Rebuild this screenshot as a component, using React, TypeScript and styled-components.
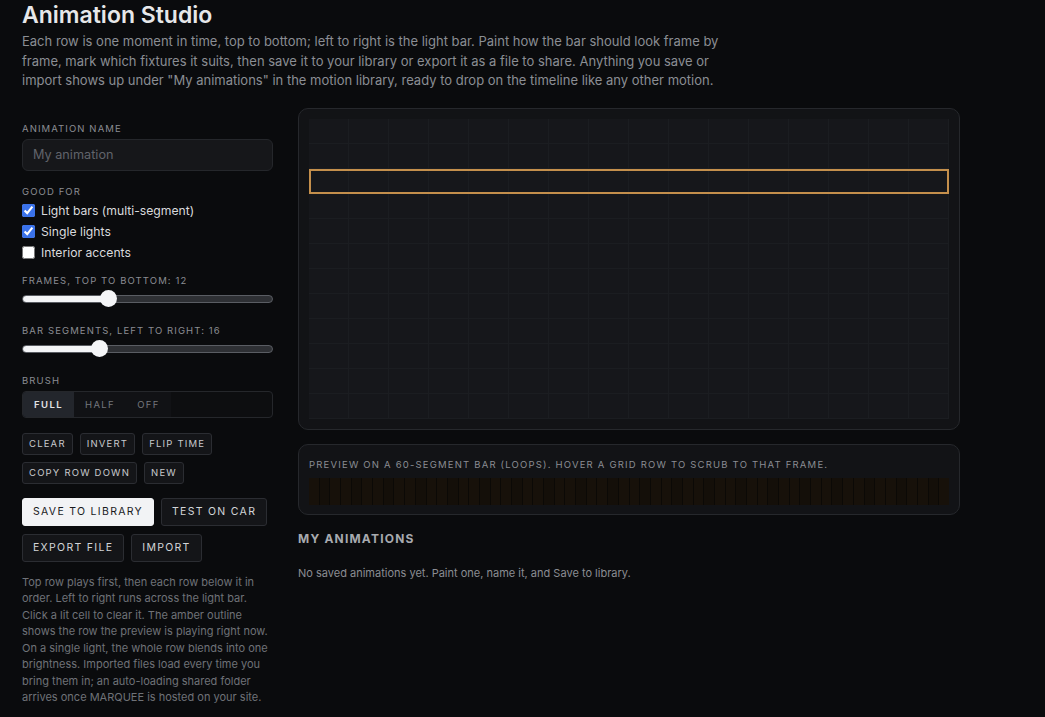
import React from 'react';
import styled, { createGlobalStyle } from 'styled-components';

const FRAMES = 12;
const SEGMENTS = 16;
const PLAYING_ROW = 2;
const PREVIEW_SEGMENTS = 60;

const GlobalStyle = createGlobalStyle`
  html, body {
    margin: 0;
    padding: 0;
    background: #0a0b0d;
  }
  body {
    font-family: Inter, "Noto Sans", "Liberation Sans", sans-serif;
    color: #e4e5e7;
  }
  * { box-sizing: border-box; }
`;

const Page = styled.div`
  padding: 2px 22px 20px;
  min-height: 717px;
`;

const Title = styled.h1`
  margin: 0;
  font-size: 23px;
  line-height: 26px;
  font-weight: 600;
  color: #e6e7e9;
`;

const Intro = styled.p`
  margin: 4px 0 0;
  max-width: 700px;
  font-size: 13px;
  line-height: 19.5px;
  color: #8b8e94;
`;

const Layout = styled.div`
  display: grid;
  grid-template-columns: 251px 662px;
  column-gap: 25px;
  margin-top: 17px;
  align-items: start;
`;

const Sidebar = styled.aside`
  display: flex;
  flex-direction: column;
  padding-top: 15px;
`;

const Label = styled.div<{ $gap?: number }>`
  font-size: 9.5px;
  letter-spacing: 1.1px;
  text-transform: uppercase;
  color: #8a8d93;
  margin-top: ${p => p.$gap ?? 0}px;
  margin-bottom: 5px;
`;

const NameInput = styled.input`
  height: 32px;
  width: 100%;
  border: 1px solid #25272b;
  border-radius: 6px;
  background: #16171a;
  color: #e4e5e7;
  padding: 0 10px;
  font: inherit;
  font-size: 12.7px;
  outline: none;
  &::placeholder { color: #60636a; }
`;

const CheckList = styled.div`
  display: flex;
  flex-direction: column;
  margin-top: -2px;
`;

const CheckRow = styled.label`
  display: flex;
  align-items: center;
  gap: 6px;
  height: 21px;
  font-size: 12.2px;
  color: #d9dadd;
  input {
    margin: 0;
    width: 13px;
    height: 13px;
    accent-color: #3a72ea;
  }
`;

const Range = styled.input`
  -webkit-appearance: none;
  appearance: none;
  width: 251px;
  height: 8px;
  margin: 4px 0 0;
  border-radius: 4px;
  border: 1px solid #5a5d63;
  background: #2e3034;
  outline: none;
  &::-webkit-slider-thumb {
    -webkit-appearance: none;
    width: 17px;
    height: 17px;
    border-radius: 50%;
    background: #f4f5f7;
    border: none;
  }
`;

const Segmented = styled.div`
  display: flex;
  height: 27px;
  border: 1px solid #25272b;
  border-radius: 4px;
  background: #0d0e10;
  overflow: hidden;
`;

const SegButton = styled.button<{ $active?: boolean }>`
  border: none;
  padding: 0 11px;
  background: ${p => (p.$active ? '#23262c' : '#111215')};
  color: ${p => (p.$active ? '#e3e4e6' : '#74777d')};
  font: inherit;
  font-size: 9.5px;
  font-weight: ${p => (p.$active ? 600 : 400)};
  letter-spacing: 1.4px;
`;

const ButtonRow = styled.div<{ $gap?: number }>`
  display: flex;
  gap: 7px;
  margin-top: ${p => p.$gap ?? 7}px;
`;

const SmallButton = styled.button`
  height: 22px;
  padding: 0 6px;
  border: 1px solid #2b2d32;
  border-radius: 3px;
  background: #141518;
  color: #c8cace;
  font: inherit;
  font-size: 9.5px;
  letter-spacing: 1.2px;
  white-space: nowrap;
`;

const BigButton = styled.button<{ $primary?: boolean }>`
  height: 28px;
  padding: 0 10px;
  border: 1px solid ${p => (p.$primary ? '#f2f3f5' : '#2b2d32')};
  border-radius: 3px;
  background: ${p => (p.$primary ? '#f2f3f5' : '#141518')};
  color: ${p => (p.$primary ? '#1a1b1e' : '#d3d5d8')};
  font: inherit;
  font-size: 10.5px;
  letter-spacing: 1.3px;
  white-space: nowrap;
`;

const HelpText = styled.p`
  margin: 12px 0 0;
  font-size: 11px;
  line-height: 16.5px;
  color: #6f7278;
`;

const Main = styled.main`
  display: flex;
  flex-direction: column;
`;

const Panel = styled.section`
  border: 1px solid #26282c;
  border-radius: 10px;
  background: #121316;
  padding: 10px;
`;

const Grid = styled.div`
  display: flex;
  flex-direction: column;
  background: #1a1c20;
`;

const GridRow = styled.div<{ $playing?: boolean }>`
  display: grid;
  grid-template-columns: repeat(${SEGMENTS}, 1fr);
  height: 25px;
  outline: ${p => (p.$playing ? '2px solid #c48f4c' : 'none')};
  outline-offset: -2px;
  position: relative;
  z-index: ${p => (p.$playing ? 1 : 0)};
`;

const Cell = styled.div`
  background: #16171b;
  border-right: 1px solid #1b1d21;
  border-bottom: 1px solid #1b1d21;
`;

const PreviewPanel = styled(Panel)`
  margin-top: 14px;
  padding: 14px 10px 9px;
`;

const PreviewCaption = styled.div`
  font-size: 9.5px;
  letter-spacing: 1.2px;
  color: #8a8d93;
  text-transform: uppercase;
`;

const Strip = styled.div`
  display: grid;
  grid-template-columns: repeat(${PREVIEW_SEGMENTS}, 1fr);
  height: 27px;
  margin-top: 8px;
  background: #0b0906;
  column-gap: 1px;
`;

const StripSegment = styled.div<{ $dim?: boolean }>`
  background: ${p => (p.$dim ? '#140f09' : '#17110a')};
`;

const SectionTitle = styled.h2`
  margin: 16px 0 0;
  font-size: 12px;
  font-weight: 700;
  letter-spacing: 1.2px;
  color: #a7aaaf;
`;

const EmptyNote = styled.p`
  margin: 20px 0 0;
  font-size: 11px;
  color: #8a8d93;
`;

export default function App() {
  return (
    <Page>
      <GlobalStyle />
      <Title>Animation Studio</Title>
      <Intro>
        Each row is one moment in time, top to bottom; left to right is the light bar. Paint how the bar should
        look frame by frame, mark which fixtures it suits, then save it to your library or export it as a file to
        share. Anything you save or import shows up under "My animations" in the motion library, ready to drop on
        the timeline like any other motion.
      </Intro>
      <Layout>
        <Sidebar>
          <Label>Animation name</Label>
          <NameInput placeholder="My animation" />

          <Label $gap={15}>Good for</Label>
          <CheckList>
            <CheckRow><input type="checkbox" defaultChecked /> Light bars (multi-segment)</CheckRow>
            <CheckRow><input type="checkbox" defaultChecked /> Single lights</CheckRow>
            <CheckRow><input type="checkbox" /> Interior accents</CheckRow>
          </CheckList>

          <Label $gap={12}>Frames, top to bottom: {FRAMES}</Label>
          <Range type="range" min={2} max={32} defaultValue={FRAMES}
            style={{ background: `linear-gradient(to right, #f4f5f7 ${((FRAMES - 2) / 30) * 100}%, #2e3034 0)` }} />

          <Label $gap={22}>Bar segments, left to right: {SEGMENTS}</Label>
          <Range type="range" min={2} max={50} defaultValue={SEGMENTS}
            style={{ background: `linear-gradient(to right, #f4f5f7 ${((SEGMENTS - 2) / 48) * 100}%, #2e3034 0)` }} />

          <Label $gap={22}>Brush</Label>
          <Segmented>
            <SegButton $active>FULL</SegButton>
            <SegButton>HALF</SegButton>
            <SegButton>OFF</SegButton>
          </Segmented>

          <ButtonRow $gap={15}>
            <SmallButton>CLEAR</SmallButton>
            <SmallButton>INVERT</SmallButton>
            <SmallButton>FLIP TIME</SmallButton>
          </ButtonRow>
          <ButtonRow>
            <SmallButton>COPY ROW DOWN</SmallButton>
            <SmallButton>NEW</SmallButton>
          </ButtonRow>

          <ButtonRow $gap={14}>
            <BigButton $primary>SAVE TO LIBRARY</BigButton>
            <BigButton>TEST ON CAR</BigButton>
          </ButtonRow>
          <ButtonRow $gap={8}>
            <BigButton>EXPORT FILE</BigButton>
            <BigButton>IMPORT</BigButton>
          </ButtonRow>

          <HelpText>
            Top row plays first, then each row below it in order. Left to right runs across the light bar. Click a
            lit cell to clear it. The amber outline shows the row the preview is playing right now. On a single
            light, the whole row blends into one brightness. Imported files load every time you bring them in; an
            auto-loading shared folder arrives once MARQUEE is hosted on your site.
          </HelpText>
        </Sidebar>

        <Main>
          <Panel>
            <Grid>
              {Array.from({ length: FRAMES }, (_, r) => (
                <GridRow key={r} $playing={r === PLAYING_ROW}>
                  {Array.from({ length: SEGMENTS }, (_, c) => <Cell key={c} />)}
                </GridRow>
              ))}
            </Grid>
          </Panel>

          <PreviewPanel>
            <PreviewCaption>Preview on a 60-segment bar (loops). Hover a grid row to scrub to that frame.</PreviewCaption>
            <Strip>
              {Array.from({ length: PREVIEW_SEGMENTS }, (_, i) => <StripSegment key={i} $dim={i % 3 === 1} />)}
            </Strip>
          </PreviewPanel>

          <SectionTitle>MY ANIMATIONS</SectionTitle>
          <EmptyNote>No saved animations yet. Paint one, name it, and Save to library.</EmptyNote>
        </Main>
      </Layout>
    </Page>
  );
}
